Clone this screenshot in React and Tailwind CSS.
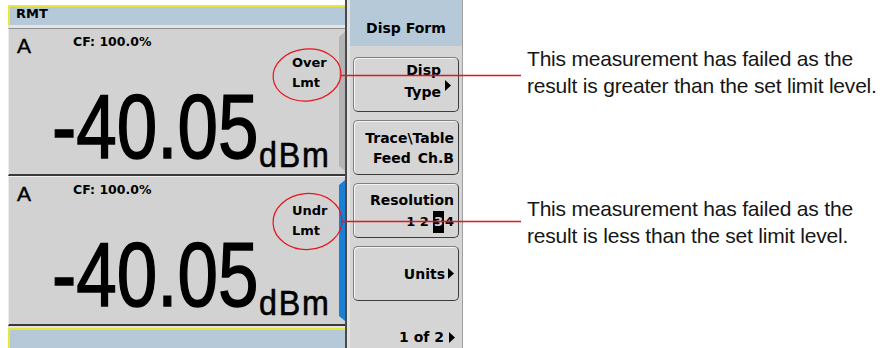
const Arrow = () => (
  <svg width="6" height="11" viewBox="0 0 6 11" className="shrink-0">
    <path d="M0 0L6 5.5L0 11Z" fill="#000" />
  </svg>
);

const SoftKey = ({ children, className = "" }) => (
  <div
    className={`flex h-[55px] rounded-[5px] border border-[#808080] border-b-[#3c3c3c] border-r-[#3c3c3c] shadow-[inset_1px_1px_0_#f4f4f4] ${className}`}
  >
    {children}
  </div>
);

const MeterPanel = ({ status, active, className = "" }) => (
  <div className={`flex border-l border-l-[#ececec] bg-[#d2d2d2] ${className}`}>
    <div className="flex-1 pl-[8px] pt-[6px]">
      <div className="flex h-[21px] items-start">
        <span className="w-[56px] font-['Liberation_Sans',sans-serif] text-[21px] leading-none [-webkit-text-stroke:0.4px_#000]">
          A
        </span>
        <span className="mt-[1px] text-[12.5px] font-bold leading-none">CF: 100.0%</span>
      </div>

      <div className="-mt-[3px] ml-[275px] text-[13px] font-bold leading-[20px]">
        <div>{status}</div>
        <div>Lmt</div>
      </div>

      <div className="-mt-[12px] ml-[35px] flex items-start font-['Liberation_Sans',sans-serif]">
        <div className="w-[206px] text-[91px] leading-none [-webkit-text-stroke:1.5px_#000]">
          <span className="inline-block origin-left scale-x-[0.8]">-40.05</span>
        </div>
        <span className="ml-[1px] mt-[56px] inline-block origin-left scale-x-[0.92] text-[35px] leading-none tracking-[2px] [-webkit-text-stroke:0.6px_#000]">
          dBm
        </span>
      </div>
    </div>

    <div
      className={`my-[3px] w-[6px] [clip-path:polygon(100%_0,100%_100%,0_calc(100%-5px),0_5px)] ${
        active ? "bg-[#1a80d6]" : "bg-[#b4b4b4]"
      }`}
    />
  </div>
);

const App = () => {
  return (
    <div className="relative flex h-[348px] w-[890px] overflow-hidden bg-white pl-[8px] font-['DejaVu_Sans',sans-serif] text-black">
      {/* display area */}
      <div className="flex w-[337px] flex-col">
        <div className="h-[5px]" />
        <div className="h-[20px] border-l-2 border-t-2 border-[#e9e63c] bg-[#b5c9d9] pl-[6px] text-[13px] font-bold leading-none">
          RMT
        </div>
        <div className="h-[3px] bg-[#e4e4e4]" />

        <MeterPanel
          status="Over"
          className="h-[148px] border-t border-t-[#8e8e8e] border-b-2 border-b-[#3a3a3a]"
        />
        <MeterPanel
          status="Undr"
          active
          className="h-[150px] border-t border-t-[#efefef] border-b-2 border-b-[#3a3a3a]"
        />

        <div className="h-[2px] bg-[#e4e4e4]" />
        <div className="flex-1 border-l-2 border-t-2 border-[#e9e63c] bg-[#b5c9d9]" />
      </div>

      {/* divider */}
      <div className="w-[5px] border-l-2 border-[#4a4a4a] bg-[#e2e2e2]" />

      {/* softkeys */}
      <div className="flex w-[113px] flex-col border-r border-r-[#a0a0a0] bg-[#d5d5d5]">
        <div className="h-[46px] bg-[#b5c9d9] pt-[21px] text-center text-[14px] font-bold leading-none">
          Disp Form
        </div>

        <div className="mt-[11px] flex flex-col gap-[8px] px-[3px] text-[14px] font-bold">
          <SoftKey className="items-start justify-end pr-[7px] pt-[1px]">
            <div className="text-right leading-[22px]">
              <div>Disp</div>
              <div>Type</div>
            </div>
            <div className="ml-[4px] self-center">
              <Arrow />
            </div>
          </SoftKey>

          <SoftKey className="items-center justify-end pr-[4px]">
            <div className="text-right leading-[20px]">
              <div>Trace\Table</div>
              <div>
                Feed <span className="pl-[2px]">Ch.B</span>
              </div>
            </div>
          </SoftKey>

          <SoftKey className="items-center justify-end pr-[4px]">
            <div className="text-right leading-[22px]">
              <div>Resolution</div>
              <div className="flex justify-end text-[13px]">
                <span>1 2</span>
                <span className="ml-[4px] bg-black px-[1px] text-[#d5d5d5]">3</span>
                <span className="ml-[1px]">4</span>
              </div>
            </div>
          </SoftKey>

          <SoftKey className="items-center justify-end pr-[4px]">
            <span className="leading-none">Units</span>
            <div className="ml-[3px]">
              <Arrow />
            </div>
          </SoftKey>
        </div>

        <div className="mt-auto flex items-center justify-end pb-[4px] pr-[7px] text-[14px] font-bold leading-none">
          <span>1 of 2</span>
          <div className="ml-[5px]">
            <Arrow />
          </div>
        </div>
      </div>

      {/* notes */}
      <div className="flex-1 pl-[64px] font-['Liberation_Sans',sans-serif] text-[21px] leading-[27px] tracking-[-0.2px] text-[#161616]">
        <p className="mt-[45px]">
          This measurement has failed as the
          <br />
          result is greater than the set limit level.
        </p>
        <p className="mt-[96px]">
          This measurement has failed as the
          <br />
          result is less than the set limit level.
        </p>
      </div>

      {/* callouts */}
      <svg
        className="pointer-events-none absolute left-0 top-0"
        width="890"
        height="348"
        viewBox="0 0 890 348"
      >
        <g fill="none" stroke="#e8141c">
          <ellipse cx="307" cy="75" rx="34" ry="26" strokeWidth="1.2" transform="rotate(-6 307 75)" />
          <line x1="341" y1="75.5" x2="521" y2="75.5" strokeWidth="1.6" />
          <ellipse cx="307.5" cy="221.5" rx="34.5" ry="28" strokeWidth="1.2" transform="rotate(-4 307.5 221.5)" />
          <line x1="342" y1="221.5" x2="521" y2="221.5" strokeWidth="1.6" />
        </g>
      </svg>
    </div>
  );
};

export default App;
